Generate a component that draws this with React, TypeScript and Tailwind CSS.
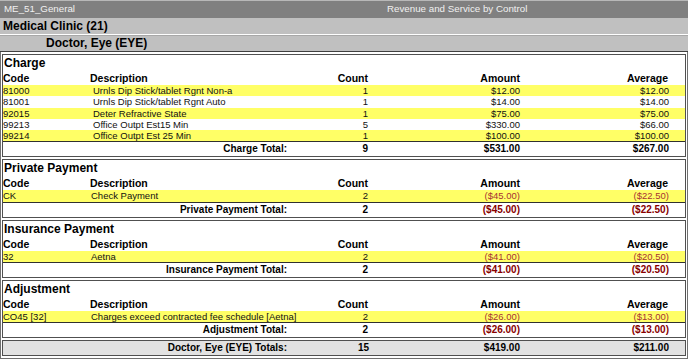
type Row = { code: string; desc: string; count: string; amount: string; avg: string };

type Section = {
  title: string;
  rows: Row[];
  totalLabel: string;
  count: string;
  amount: string;
  avg: string;
  neg?: boolean;
  descPad: string;
};

const sections: Section[] = [
  {
    title: "Charge",
    descPad: "pl-[3px]",
    rows: [
      { code: "81000", desc: "Urnls Dip Stick/tablet Rgnt Non-a", count: "1", amount: "$12.00", avg: "$12.00" },
      { code: "81001", desc: "Urnls Dip Stick/tablet Rgnt Auto", count: "1", amount: "$14.00", avg: "$14.00" },
      { code: "92015", desc: "Deter Refractive State", count: "1", amount: "$75.00", avg: "$75.00" },
      { code: "99213", desc: "Office Outpt Est15 Min", count: "5", amount: "$330.00", avg: "$66.00" },
      { code: "99214", desc: "Office Outpt Est 25 Min", count: "1", amount: "$100.00", avg: "$100.00" },
    ],
    totalLabel: "Charge Total:",
    count: "9",
    amount: "$531.00",
    avg: "$267.00",
  },
  {
    title: "Private Payment",
    descPad: "pl-[1px]",
    neg: true,
    rows: [{ code: "CK", desc: "Check Payment", count: "2", amount: "($45.00)", avg: "($22.50)" }],
    totalLabel: "Private Payment Total:",
    count: "2",
    amount: "($45.00)",
    avg: "($22.50)",
  },
  {
    title: "Insurance Payment",
    descPad: "pl-[1px]",
    neg: true,
    rows: [{ code: "32", desc: "Aetna", count: "2", amount: "($41.00)", avg: "($20.50)" }],
    totalLabel: "Insurance Payment Total:",
    count: "2",
    amount: "($41.00)",
    avg: "($20.50)",
  },
  {
    title: "Adjustment",
    descPad: "pl-[1px]",
    neg: true,
    rows: [
      { code: "CO45 [32]", desc: "Charges exceed contracted fee schedule [Aetna]", count: "2", amount: "($26.00)", avg: "($13.00)" },
    ],
    totalLabel: "Adjustment Total:",
    count: "2",
    amount: "($26.00)",
    avg: "($13.00)",
  },
];

const cols = "grid grid-cols-[87px_210px_69px_151px_149px_1fr]";

function ReportSection({ s }: { s: Section }) {
  return (
    <div className="border border-[#505050] bg-white">
      <div className="h-[16px] text-[12px] font-bold leading-[16px] pl-[1px]">{s.title}</div>
      <div className={`${cols} h-[14px] text-[10.5px] font-bold leading-[14px]`}>
        <div>Code</div>
        <div>Description</div>
        <div className="text-right pr-[1px]">Count</div>
        <div className="text-right">Amount</div>
        <div className="text-right pr-[1px]">Average</div>
        <div />
      </div>
      {s.rows.map((r, i) => (
        <div
          key={r.code}
          className={`${cols} h-[11.3px] text-[9.5px] leading-[11.3px] text-[#111] ${i % 2 === 0 ? "bg-[#ffff66]" : "bg-white"}`}
        >
          <div>{r.code}</div>
          <div className={s.descPad}>{r.desc}</div>
          <div className="text-right pr-[1px]">{r.count}</div>
          <div className={`text-right ${s.neg ? "text-[#a83232]" : ""}`}>{r.amount}</div>
          <div className={`text-right ${s.neg ? "text-[#a83232]" : ""}`}>{r.avg}</div>
          <div />
        </div>
      ))}
      <div className="h-px bg-[#303030]" />
      <div className={`${cols} h-[14px] text-[10px] font-bold leading-[14px]`}>
        <div className="col-span-2 text-right pr-[13px]">{s.totalLabel}</div>
        <div className="text-right pr-[1px]">{s.count}</div>
        <div className={`text-right ${s.neg ? "text-[#880000]" : ""}`}>{s.amount}</div>
        <div className={`text-right ${s.neg ? "text-[#880000]" : ""}`}>{s.avg}</div>
        <div />
      </div>
    </div>
  );
}

export default function App() {
  return (
    <div className="w-[688px] h-[360px] overflow-hidden bg-white text-black font-['Liberation_Sans',Arial,sans-serif]">
      <div className="flex h-[18px] items-center border-t border-[#b8b8b8] bg-[#808080] text-[9.75px] text-[#f0f0f0]">
        <div className="w-[387px] pl-[4px]">ME_51_General</div>
        <div>Revenue and Service by Control</div>
      </div>
      <div className="h-[16px] bg-[#c0c0c0] pl-[3px] text-[12px] font-bold leading-[16px]">Medical Clinic (21)</div>
      <div className="h-px bg-white" />
      <div className="h-[17px] border-t border-[#a8a8a8] border-b border-b-[#404040] bg-[#c0c0c0] pl-[46px] text-[12px] font-bold leading-[15px]">
        Doctor, Eye (EYE)
      </div>
      <div className="flex h-[307px] flex-col gap-[2px] border-x border-b border-[#707070] px-px pt-[2px]">
        {sections.map((s) => (
          <ReportSection key={s.title} s={s} />
        ))}
        <div className={`${cols} h-[16px] border border-[#505050] bg-[#e2e2e2] text-[10px] font-bold leading-[14px]`}>
          <div className="col-span-2 text-right pr-[13px]">Doctor, Eye (EYE) Totals:</div>
          <div className="text-right">15</div>
          <div className="text-right">$419.00</div>
          <div className="text-right">$211.00</div>
          <div />
        </div>
      </div>
    </div>
  );
}
